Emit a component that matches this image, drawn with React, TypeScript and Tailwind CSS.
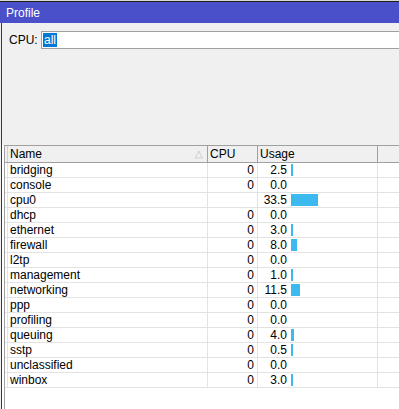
import React from "react";

const rows = [
  { name: "bridging", cpu: "0", usage: 2.5 },
  { name: "console", cpu: "0", usage: 0 },
  { name: "cpu0", cpu: "", usage: 33.5 },
  { name: "dhcp", cpu: "0", usage: 0 },
  { name: "ethernet", cpu: "0", usage: 3 },
  { name: "firewall", cpu: "0", usage: 8 },
  { name: "l2tp", cpu: "0", usage: 0 },
  { name: "management", cpu: "0", usage: 1 },
  { name: "networking", cpu: "0", usage: 11.5 },
  { name: "ppp", cpu: "0", usage: 0 },
  { name: "profiling", cpu: "0", usage: 0 },
  { name: "queuing", cpu: "0", usage: 4 },
  { name: "sstp", cpu: "0", usage: 0.5 },
  { name: "unclassified", cpu: "0", usage: 0 },
  { name: "winbox", cpu: "0", usage: 3 },
];

const barWidth = (v: number) => (v > 0 ? Math.max(2, Math.round(v * 0.8)) : 0);

const App = () => {
  return (
    <div className="w-[399px] h-[409px] overflow-hidden bg-[#f0f0f0] flex flex-col font-['Liberation_Sans',Arial,sans-serif] text-[12px] text-black">
      <div className="h-px bg-[#d8d8d8]" />
      <div className="h-px bg-[#1e1e1e]" />
      <div className="h-[21px] bg-[#4a4fca] text-white pl-[6px] pt-[4px] leading-[14px]">
        Profile
      </div>

      <div className="flex-1 flex flex-col border-l border-[#3a3a3a] ml-px">
        <div className="flex items-center mt-[8px] h-[18px]">
          <span className="w-[39px] pl-[7px] leading-[14px]">CPU:</span>
          <div className="flex-1 h-[18px] bg-white border-y border-l border-[#a0a0a0] flex items-center pl-[1px]">
            <span className="bg-[#0078d7] text-white px-[1px] h-[14px] leading-[14px]">all</span>
          </div>
        </div>

        <div className="h-[96px]" />

        <div className="flex-1 flex bg-white">
          <div className="w-[3px] border-r border-[#a0a0a0] bg-white" />
          <div className="flex-1 flex flex-col">
            <div className="flex h-[18px] bg-[#f0f0f0] border-y border-[#a0a0a0] leading-[16px]">
              <div className="w-[3px] border-r border-[#d0d0d0]" />
              <div className="w-[200px] border-r border-[#a0a0a0] pl-[2px] flex justify-between pr-[4px]">
                <span>Name</span>
                <span className="text-[#c0c0c0] text-[10px]">△</span>
              </div>
              <div className="w-[50px] border-r border-[#a0a0a0] pl-[2px]">CPU</div>
              <div className="w-[120px] border-r border-[#a0a0a0] pl-[2px]">Usage</div>
              <div className="flex-1" />
            </div>

            {rows.map((r) => (
              <div key={r.name} className="flex h-[15px] border-b border-[#e3e3e3] leading-[14px]">
                <div className="w-[3px] border-r border-[#e3e3e3]" />
                <div className="w-[200px] border-r border-[#e3e3e3] pl-[2px]">{r.name}</div>
                <div className="w-[50px] border-r border-[#e3e3e3] text-right pr-[3px]">{r.cpu}</div>
                <div className="w-[120px] border-r border-[#e3e3e3] flex items-center">
                  <span className="w-[29px] text-right">{r.usage.toFixed(1)}</span>
                  <div
                    className="ml-[4px] h-[12px] bg-[#3cb9ef]"
                    style={{ width: barWidth(r.usage) }}
                  />
                </div>
                <div className="flex-1" />
              </div>
            ))}
          </div>
        </div>
      </div>
    </div>
  );
};

export default App;
